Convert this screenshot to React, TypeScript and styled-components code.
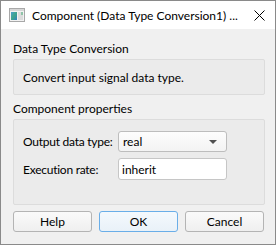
import React from "react";
import styled, { createGlobalStyle, css } from "styled-components";

const GlobalStyle = createGlobalStyle`
  html, body {
    margin: 0;
    padding: 0;
    background: #ffffff;
  }
  body {
    font-family: Lato, "Noto Sans", sans-serif;
    font-size: 12px;
    color: #000000;
  }
`;

const Window = styled.div`
  width: 276px;
  height: 245px;
  box-sizing: border-box;
  border: 1px solid #8a8a8a;
  display: flex;
  flex-direction: column;
  background: #f0f0f0;
`;

const TitleBar = styled.div`
  height: 29px;
  background: #ffffff;
  display: flex;
  align-items: center;
  padding-left: 8px;
  padding-right: 10px;
  gap: 7px;
`;

const Title = styled.div`
  flex: 1;
  font-size: 12px;
  white-space: nowrap;
`;

const Body = styled.div`
  flex: 1;
  display: flex;
  flex-direction: column;
  padding: 12px 10px 12px 12px;
`;

const SectionLabel = styled.div<{ $top?: number }>`
  line-height: 16px;
  margin-top: ${(p) => p.$top ?? 0}px;
  margin-bottom: 2px;
`;

const GroupBox = styled.div<{ $height: number }>`
  height: ${(p) => p.$height}px;
  box-sizing: border-box;
  border: 1px solid #dcdcdc;
  border-radius: 2px;
  background: #ebebeb;
`;

const Description = styled.div`
  padding: 0 9px;
  line-height: 35px;
`;

const Form = styled.div`
  display: grid;
  grid-template-columns: 95px 109px;
  row-gap: 6px;
  padding: 11px 0 0 9px;
  align-items: center;
`;

const FieldLabel = styled.div`
  white-space: nowrap;
  letter-spacing: -0.25px;
`;

const fieldBase = css`
  box-sizing: border-box;
  border-radius: 3px;
  display: flex;
  align-items: center;
`;

const Combo = styled.div`
  ${fieldBase};
  height: 21px;
  border: 1px solid #bdbdbd;
  background: linear-gradient(#fdfdfd, #f3f3f3);
  padding: 0 9px 0 4px;
  justify-content: space-between;
`;

const Arrow = styled.span`
  width: 0;
  height: 0;
  border-left: 4px solid transparent;
  border-right: 4px solid transparent;
  border-top: 4px solid #505050;
`;

const Edit = styled.div`
  ${fieldBase};
  height: 22px;
  border: 1px solid #c6c6c6;
  background: #ffffff;
  padding: 0 3px;
`;

const ButtonRow = styled.div`
  display: flex;
  gap: 7px;
  margin-top: 6px;
  padding-right: 1px;
`;

const Button = styled.button<{ $primary?: boolean }>`
  flex: 1;
  height: 21px;
  font-family: inherit;
  font-size: 12px;
  color: #000000;
  border-radius: 3px;
  border: 1px solid ${(p) => (p.$primary ? "#6aaee8" : "#b4b4b4")};
  background: ${(p) =>
    p.$primary
      ? "linear-gradient(#f4f9fd, #e9f1f8)"
      : "linear-gradient(#fafafa, #efefef)"};
  padding: 0;
`;

const CloseIcon = () => (
  <svg width="11" height="11" viewBox="0 0 11 11">
    <path d="M0.5 0.5 L10.5 10.5 M10.5 0.5 L0.5 10.5" stroke="#000" strokeWidth="1" />
  </svg>
);

const AppIcon = () => (
  <svg width="16" height="14" viewBox="0 0 16 14">
    <defs>
      <linearGradient id="pane" x1="0" y1="0" x2="1" y2="1">
        <stop offset="0" stopColor="#4a9fd0" />
        <stop offset="0.5" stopColor="#3fa58a" />
        <stop offset="1" stopColor="#2f7fc0" />
      </linearGradient>
    </defs>
    <rect x="0.5" y="0.5" width="15" height="13" fill="#f2f2f2" stroke="#a8a8a8" />
    <rect x="1" y="1" width="14" height="2" fill="#d6d6d6" />
    <rect x="2" y="4" width="6" height="8" fill="url(#pane)" />
    <rect x="9" y="4" width="5" height="8" fill="#dcdcdc" />
    <rect x="12" y="4" width="2" height="3" fill="#8fc4a8" />
  </svg>
);

export default function App() {
  return (
    <>
      <GlobalStyle />
      <Window>
        <TitleBar>
          <AppIcon />
          <Title>Component (Data Type Conversion1) ...</Title>
          <CloseIcon />
        </TitleBar>
        <Body>
          <SectionLabel>Data Type Conversion</SectionLabel>
          <GroupBox $height={36}>
            <Description>Convert input signal data type.</Description>
          </GroupBox>
          <SectionLabel $top={6}>Component properties</SectionLabel>
          <GroupBox $height={86}>
            <Form>
              <FieldLabel>Output data type:</FieldLabel>
              <Combo>
                <span>real</span>
                <Arrow />
              </Combo>
              <FieldLabel>Execution rate:</FieldLabel>
              <Edit>inherit</Edit>
            </Form>
          </GroupBox>
          <ButtonRow>
            <Button>Help</Button>
            <Button $primary>OK</Button>
            <Button>Cancel</Button>
          </ButtonRow>
        </Body>
      </Window>
    </>
  );
}
